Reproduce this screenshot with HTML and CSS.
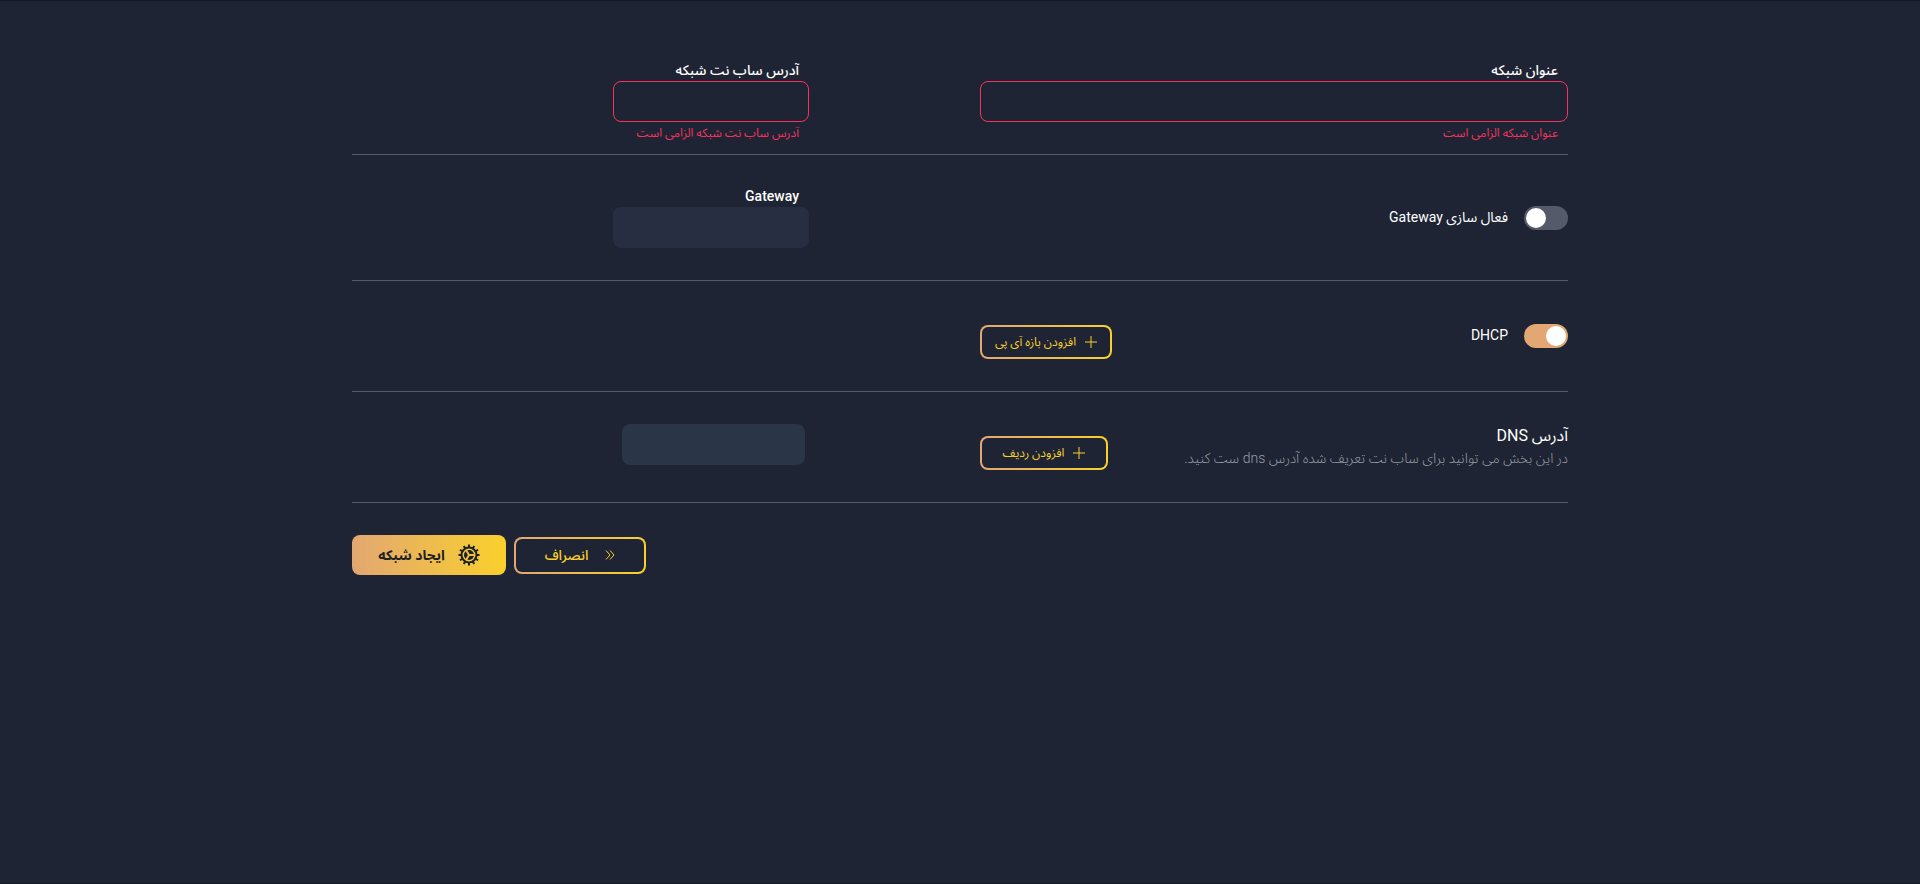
FILE: index.html
```html
<!DOCTYPE html>
<html lang="fa" dir="rtl">
<head>
<meta charset="utf-8">
<meta name="viewport" content="width=device-width, initial-scale=1">
<title>ایجاد شبکه</title>
<link rel="stylesheet" href="styles.css">
</head>
<body>
<form class="network-form">
  <section class="row row-first">
    <div class="field">
      <label class="label" for="title">عنوان شبکه</label>
      <input class="input input-error" id="title" type="text" aria-describedby="title-error">
      <p class="error" id="title-error">عنوان شبکه الزامی است</p>
    </div>
    <div class="field field-side">
      <label class="label" for="subnet">آدرس ساب نت شبکه</label>
      <input class="input input-error" id="subnet" type="text" aria-describedby="subnet-error">
      <p class="error" id="subnet-error">آدرس ساب نت شبکه الزامی است</p>
    </div>
  </section>

  <section class="row row-gateway">
    <div class="main">
      <label class="switch"><input class="toggle" type="checkbox"><span>فعال سازی Gateway</span></label>
    </div>
    <div class="field field-side">
      <label class="label" for="gateway">Gateway</label>
      <input class="input input-disabled" id="gateway" type="text" disabled>
    </div>
  </section>

  <section class="row row-dhcp">
    <div class="main">
      <label class="switch"><input class="toggle" type="checkbox" checked><span>DHCP</span></label>
      <button class="outline add add-range" type="button">
        <svg class="plus" viewBox="0 0 12 12" aria-hidden="true"><path d="M6 0v12M0 6h12"/></svg>
        <span>افزودن بازه آی پی</span>
      </button>
    </div>
  </section>

  <section class="row row-dns">
    <div class="main">
      <div>
        <h2 class="title">آدرس DNS</h2>
        <p class="hint">در این بخش می توانید برای ساب نت تعریف شده آدرس dns ست کنید.</p>
      </div>
      <button class="outline add add-row" type="button">
        <svg class="plus" viewBox="0 0 12 12" aria-hidden="true"><path d="M6 0v12M0 6h12"/></svg>
        <span>افزودن ردیف</span>
      </button>
    </div>
    <div class="field-side dns-field">
      <input class="input input-dns" type="text" aria-label="آدرس DNS">
    </div>
  </section>

  <footer class="actions">
    <button class="outline cancel" type="button">
      <svg class="chevrons" viewBox="0 0 10 10" aria-hidden="true"><path d="M1 .5 5 5 1 9.500M5 .5 9 5 5 9.500"/></svg>
      <span>انصراف</span>
    </button>
    <button class="create" type="submit">
      <svg class="gear" viewBox="0 0 22 22" aria-hidden="true">
        <g class="teeth">
          <path id="t" d="M11 .5v3M11 18.500v3M.5 11h3M18.500 11h3"/>
          <use href="#t" transform="rotate(30 11 11)"/>
          <use href="#t" transform="rotate(60 11 11)"/>
        </g>
        <circle class="ring" cx="11" cy="11" r="7.500"/>
        <circle class="core" cx="11" cy="11" r="5"/>
        <path class="spokes" d="M11 11h5.500M11 11 8.200 6.200M11 11l-2.800 4.800"/>
      </svg>
      <span>ایجاد شبکه</span>
    </button>
  </footer>
</form>
</body>
</html>
```
FILE: styles.css
```css
* { box-sizing: border-box; }

body {
  margin: 0;
  min-height: 100vh;
  padding: 60px 32px;
  border-top: 1px solid #141824;
  border-bottom: 1px solid #141824;
  background: #1e2433;
  color: #fff;
  font: 14px/20px Roboto, "Noto Sans Arabic", "DejaVu Sans", sans-serif;
}

h2, p { margin: 0; font-weight: 400; }
button, input { font: inherit; margin: 0; }

.network-form { max-width: 1216px; margin: 0 auto; }

.row {
  display: grid;
  grid-template-columns: 588fr 171fr 196fr 261fr;
  padding: 32px 0;
  border-bottom: 1px solid #545a6a;
}
.row-first { padding: 0 0 10px; }
.row-dhcp { padding-top: 43px; }

.field { display: flex; flex-direction: column; }
.field-side { grid-column: 3; }
.label { padding: 0 10px 2px; font-weight: 500; line-height: 18px; }
.error { padding: 0 10px; margin-top: 1px; padding-bottom: 1px; color: #f6335f; font-size: 12px; }

.input {
  width: 100%;
  height: 41px;
  padding: 0 12px;
  border: 0;
  border-radius: 8px;
  background: transparent;
  color: #fff;
}
.input-error { border: 1px solid #f6335f; }
.input-disabled { background: #272e41; }
.input-dns { background: #2a3547; }

.main { display: flex; justify-content: space-between; align-items: flex-start; }

.switch { display: flex; gap: 16px; align-items: flex-start; line-height: 22px; }
.row-gateway .switch { margin-top: 19px; }

.toggle {
  appearance: none;
  width: 44px;
  height: 24px;
  padding: 2px;
  border-radius: 12px;
  background: #545a6a;
}
.toggle::before {
  content: "";
  display: block;
  width: 20px;
  height: 20px;
  margin-right: 20px;
  border-radius: 50%;
  background: #fff;
}
.toggle:checked { background: #e2a772; }
.toggle:checked::before { margin-right: 0; }

.outline {
  display: flex;
  align-items: center;
  justify-content: center;
  border: 2px solid transparent;
  border-radius: 8px;
  background:
    linear-gradient(#1e2433, #1e2433) padding-box,
    linear-gradient(to right, #e2a772, #fad02c) border-box;
  color: #fad02c;
  white-space: nowrap;
}
.add { height: 34px; padding: 0; gap: 9px; font-size: 12px; }
.add-range { width: 132px; margin-top: 1px; }
.add-row { width: 128px; margin-top: 12px; }
.plus { width: 12px; height: 12px; fill: none; stroke: #fad02c; stroke-width: 1; }

.title { font-size: 16px; line-height: 24px; }
.hint { color: #9a9da6; font-weight: 300; line-height: 20px; }
.dns-field { padding: 0 4px 0 9px; }

.actions {
  display: flex;
  justify-content: flex-end;
  align-items: center;
  gap: 8px;
  padding-top: 32px;
}
.cancel { width: 132px; height: 37px; gap: 17px; font-weight: 500; }
.chevrons { width: 10px; height: 10px; fill: none; stroke: #fad02c; stroke-width: 1; }
.create {
  display: flex;
  align-items: center;
  justify-content: center;
  gap: 13px;
  width: 154px;
  height: 40px;
  border: 0;
  border-radius: 8px;
  background: linear-gradient(to right, #e2a772, #fad02c);
  color: #1e2126;
  font-weight: 700;
  white-space: nowrap;
}
.gear { width: 22px; height: 22px; fill: none; stroke: #1e2126; }
.teeth { stroke-width: 2; }
.ring { stroke-width: 2; }
.core { fill: #1e2126; stroke: none; }
.spokes { stroke: #f2c144; stroke-width: 2; }
```
